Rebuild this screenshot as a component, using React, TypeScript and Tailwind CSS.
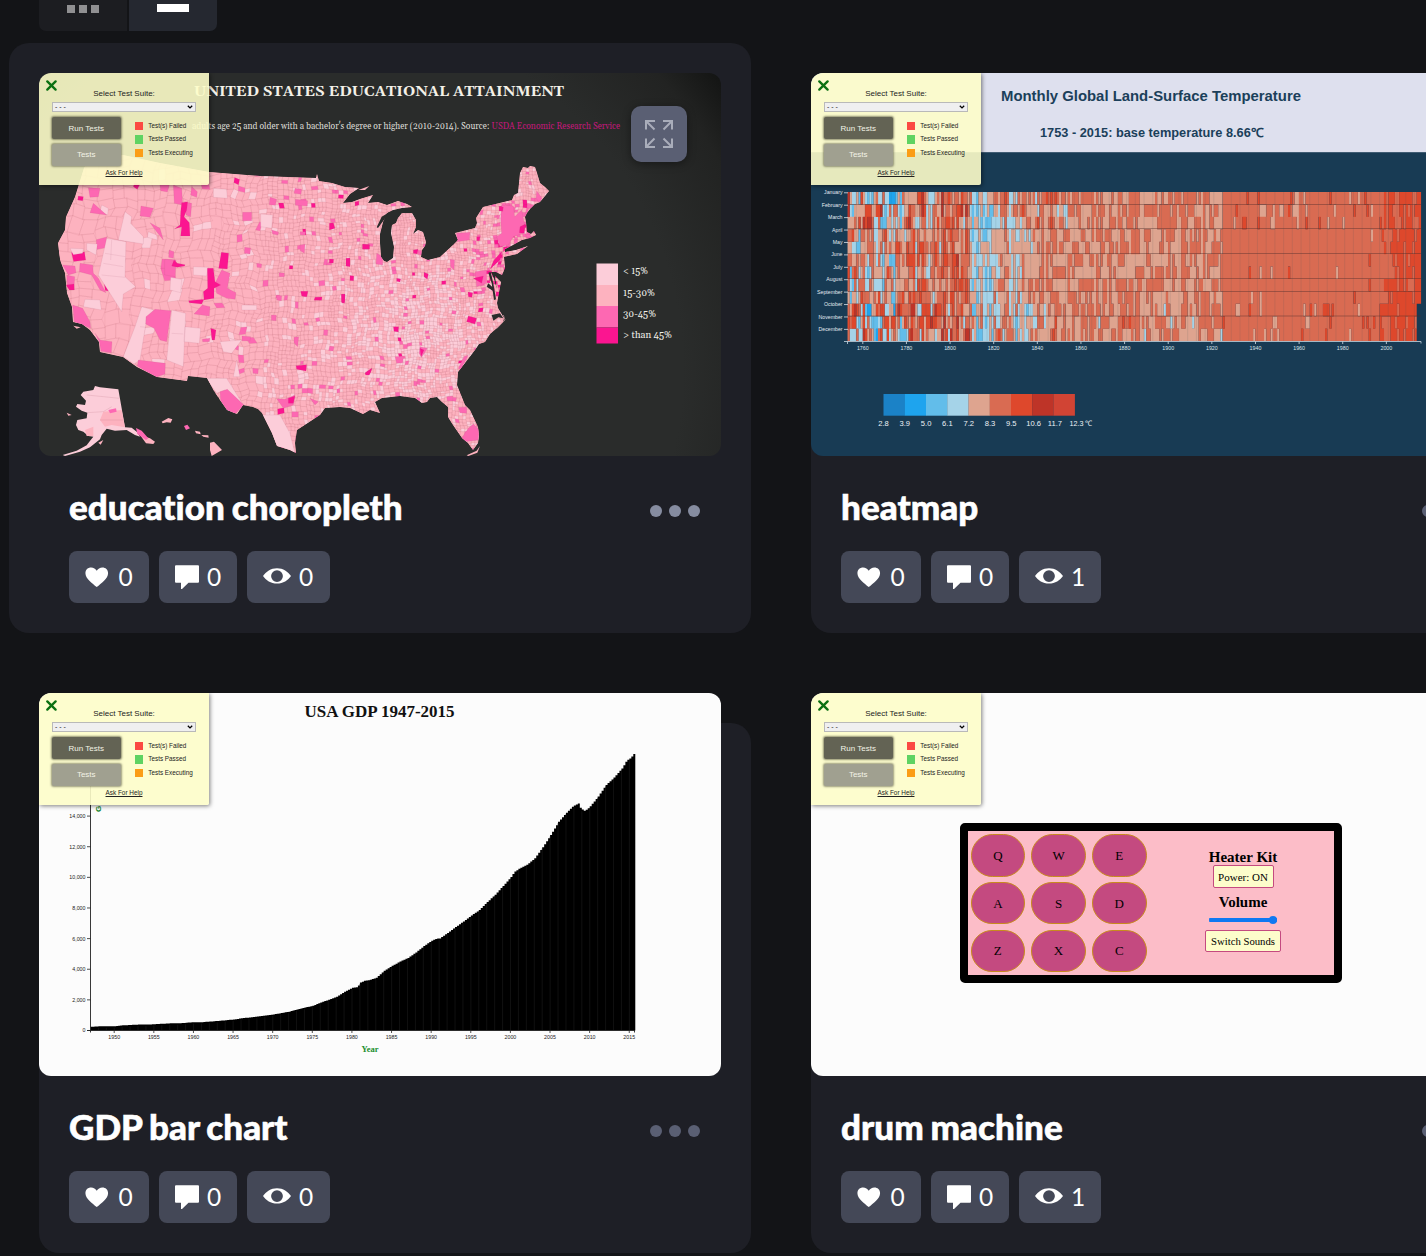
import React from "react";

/* ---------- deterministic helpers ---------- */
function makeRandom(seed: number) {
  let s = seed;
  return () => {
    s = (s * 1664525 + 1013904223) % 4294967296;
    return s / 4294967296;
  };
}

/* ---------- county map ---------- */
const LAND =
  "M84 168L88 162L110 157L123 155L160 163L209 172L260 176L316 178L317 174L319 181L332 183L345 187L359 188L350 194L343 203L352 202L360 199L373 195L368 203L378 202L387 205L398 201L407 204L412 207L402 208L393 210L387 213L383 222L380 234L380 243L381 257L384 261L387 262L393 258L394 247L391 233L392 225L396 223L398 218L402 213L412 213L416 220L416 227L413 234L418 230L423 232L426 242L425 246L422 250L421 257L428 260L440 257L453 245L458 240L455 233L463 231L475 228L477 223L476 218L483 207L512 200L514 195L518 193L520 173L523 167L528 168L530 166L535 167L537 173L540 183L545 187L549 191L545 196L540 202L535 204L530 209L527 213L525 217L526 222L527 232L531 234L534 231L536 235L530 238L522 240L513 245L505 249L505 252L516 250L528 246L517 254L504 257L505 268L502 275L496 272L491 272L494 279L497 290L495 276L501 282L497 303L498 308L504 318L503 322L497 328L490 334L485 342L479 344L475 350L465 363L458 372L457 385L465 405L470 410L478 427L479 436L478 443L473 450L468 443L462 438L453 425L448 417L448 407L442 402L437 397L430 398L427 402L422 403L415 398L400 396L382 398L375 402L380 413L370 410L363 414L350 408L340 407L325 408L320 415L297 430L295 443L296 453L290 450L277 446L272 433L262 413L258 409L253 407L243 405L237 414L227 410L220 400L214 391L207 378L188 376L187 381L157 377L137 367L123 357L100 352L99 342L90 330L82 324L73 322L72 307L67 293L65 273L60 260L58 243L65 230L66 217L75 197Z";

const LIGHT = 0;
const MID = 1;
const HOT = 2;
const DEEP = 3;
const MAP_FILLS = ["#fccdd9", "#fdb2bf", "#fd68b2", "#fb1590"];

function buildCounties() {
  const rnd = makeRandom(77);
  const paths = ["", "", "", ""];
  const warp = (x: number, y: number) => {
    const k = x < 260 ? 1 : 0.45;
    const wx = x + k * (2.2 * Math.sin(y / 7 + x / 31) + Math.sin(y / 2.7)) - (x < 260 ? (y - 250) * 0.1 * ((260 - x) / 200) : 0);
    const wy = y + k * (2 * Math.sin(x / 8 + y / 23) + 0.8 * Math.sin(x / 2.9));
    return `${wx.toFixed(1)} ${wy.toFixed(1)}`;
  };
  const pick = (x: number, y: number) => {
    const r = rnd();
    const south = Math.exp(-(((x - 415) / 65) ** 2) - ((y - 335) / 62) ** 2);
    const northEast = x > 494 && y > 203 && y < 246 ? 0.4 : 0;
    const coast = x > 470 && y > 240 && y < 296 ? 0.2 : 0;
    const west = x < 230 ? 0.005 : 0.03;
    if (r < 0.004 + northEast * 0.13 + coast * 0.3) return DEEP;
    if (r < 0.012 + west + northEast + coast) return HOT;
    const light = x < 230 ? 0.05 : x < 300 ? 0.1 : 0.16 + 0.6 * south + (y > 370 && x < 310 ? 0.4 : 0);
    return rnd() < light ? LIGHT : MID;
  };
  const split = (x: number, y: number, w: number, h: number) => {
    const cx = x + w / 2;
    const size = cx < 140 ? 17 : cx < 215 ? 13 : cx < 265 ? 9 : cx < 330 ? 6.6 : cx < 400 ? 5.4 : 4.7;
    if (w > size || h > size) {
      const t = 0.4 + rnd() * 0.2;
      if (w > h) {
        split(x, y, w * t, h);
        split(x + w * t, y, w * (1 - t), h);
      } else {
        split(x, y, w, h * t);
        split(x, y + h * t, w, h * (1 - t));
      }
      return;
    }
    const c = pick(cx, y + h / 2);
    paths[c] += `M${warp(x, y)}L${warp(x + w, y)}L${warp(x + w, y + h)}L${warp(x, y + h)}Z`;
  };
  split(45, 145, 515, 320);
  return paths;
}
const COUNTIES = buildCounties();

// Large western counties, drawn at three units per pixel.
const WEST_LIGHT =
  "M255 155L275 170L272 190L310 230L310 252L235 240ZM200 235L258 245L255 350L287 380L250 402L245 455L175 345L190 280ZM305 440L342 450L318 490L300 600L282 612L250 590L285 500ZM395 450L437 460L430 620L380 600ZM435 500L482 505L478 550L432 545ZM520 85L560 88L562 115L520 112ZM662 162L698 165L695 205L662 200ZM460 320L505 322L500 348L460 345ZM140 250L172 252L168 285L140 270ZM90 265L130 266L128 280L100 284ZM135 418L180 420L184 450L130 440ZM540 545L605 540L575 580L550 575ZM498 655L560 655L610 735L590 720L555 690L530 700ZM392 352L425 358L422 398L390 390ZM185 135L205 145L203 165L180 155ZM325 215L350 225L352 240L322 232ZM605 435L650 436L650 450L605 450ZM590 600L600 650L580 650ZM665 765L720 765L750 820L765 880L710 858Z";
const WEST_HOT =
  "M145 83L180 85L175 110L150 112ZM160 130L200 165L150 158ZM303 138L340 145L330 172L300 168ZM400 75L425 85L428 135L403 130ZM455 80L472 95L470 112L452 105ZM360 75L388 75L382 96L362 92ZM330 188L360 205L370 240L350 215ZM434 125L455 130L452 170L438 165ZM387 270L402 275L400 295L386 292ZM374 298L408 300L406 350L374 345ZM120 310L158 315L160 340L175 355L198 398L180 390L155 345L118 335ZM68 315L105 318L108 338L85 345ZM80 345L104 350L102 388L82 375ZM318 470L345 448L393 452L380 545L360 540L342 505L317 492ZM98 435L128 445L150 485L152 505L103 485ZM165 520L180 540L216 545L214 578L183 574L178 545ZM295 600L376 610L375 642L348 652L292 618ZM540 695L562 688L612 735L585 762L560 750L542 722ZM545 330L570 340L562 385L588 398L585 418L560 415L530 400L525 370ZM487 435L510 440L508 468L462 462ZM487 538L510 535L508 545L488 545ZM608 157L635 157L635 182L608 182ZM690 112L710 118L706 136L688 134ZM765 85L785 88L783 103L762 100ZM766 118L803 122L802 138L766 136ZM614 262L632 264L630 282L613 280ZM695 210L716 216L714 225L698 222ZM650 310L665 312L664 323L651 322ZM717 338L733 339L733 350L718 350ZM710 406L725 407L724 422L710 420ZM694 465L709 466L708 482L694 481ZM606 528L632 530L630 543L606 542ZM638 625L655 626L654 641L639 640ZM762 532L776 530L773 560L762 548ZM780 215L797 215L796 225L781 225ZM780 255L795 253L793 280L781 272ZM710 716L735 718L765 705L760 735L730 745ZM810 715L835 725L825 735Z";
const WEST_DEEP =
  "M425 128L443 125L440 150L432 170L448 188L450 228L422 228L425 200L403 207L420 195L422 155ZM544 277L566 280L562 327L536 325ZM502 325L520 325L525 365L542 375L522 385L522 415L492 420L490 395L503 385ZM446 422L492 418L485 432L448 428ZM402 300L412 310L435 314L434 318L412 322L395 318ZM115 108L130 110L128 122L113 120ZM78 375L102 372L103 390L88 390ZM283 70L300 72L292 88L280 80ZM768 617L800 614L798 633L770 628ZM968 253L988 254L988 268L968 268ZM868 190L880 188L885 205L868 210ZM782 394L804 394L800 410L785 408ZM825 412L846 411L845 421L822 421ZM904 403L915 402L914 430L905 428ZM512 505L528 510L524 540L516 540ZM868 297L881 298L880 309L868 309ZM745 715L765 708L760 730L745 730ZM975 638L996 624L990 640Z";
const EAST_HOT =
  "M485 405L520 408L524 440L545 420L555 470L550 490L520 500L505 525L480 530L470 500L485 490L482 450ZM405 605L440 600L440 640L410 650ZM350 490L390 487L388 510L350 515ZM385 1075L400 1062L418 1080L415 1110L375 1115L365 1105ZM355 1012L380 1012L380 1030L360 1028ZM165 860L190 858L188 878L170 880ZM110 550L128 560L128 585L108 582ZM590 362L606 385L598 398L588 385ZM320 980L338 978L338 993L322 992ZM355 895L372 860L385 855L362 900ZM330 568L344 570L342 600L332 590ZM240 830L262 835L245 862L237 850Z";
const EAST_DEEP =
  "M540 470L556 462L553 490L538 488ZM462 570L485 545L480 570L450 598ZM385 738L410 745L405 762L380 755ZM400 625L430 618L425 640ZM384 666L398 668L396 682L385 680ZM68 523L88 524L88 537L68 537ZM478 408L490 412L488 424L478 422ZM18 565L30 564L30 590L18 588ZM160 770L176 770L175 786L162 784ZM220 540L234 538L232 552L220 550ZM252 607L265 612L262 628L252 620ZM75 910L96 897L88 915L77 915ZM5 672L15 674L14 695L5 695ZM170 625L182 627L180 636L170 634ZM410 500L420 500L419 512L410 512ZM490 530L510 530L490 545ZM240 835L252 840L243 860Z";

function ChoroplethMap() {
  const legend = [
    ["< 15%", 263.5, 21.5],
    ["15-30%", 285, 21],
    ["30-45%", 306, 21.5],
    ["> than 45%", 327.5, 16],
  ] as const;
  return (
    <svg viewBox="39 73 682 383" className="block h-full w-full" fontFamily="'Gelasio','Georgia','Liberation Serif',serif">
      <defs>
        <radialGradient id="vignette" gradientUnits="userSpaceOnUse" cx="330" cy="370" r="490">
          <stop offset="0.72" stopColor="#2a2c2b" />
          <stop offset="0.9" stopColor="#222322" />
          <stop offset="1" stopColor="#131413" />
        </radialGradient>
        <clipPath id="land">
          <path d={LAND} />
        </clipPath>
      </defs>
      <rect x="39" y="73" width="682" height="383" fill="url(#vignette)" />
      <text x="194" y="96" fontSize="14.5" fontWeight="700" fill="#f4f1e8" textLength="370" lengthAdjust="spacingAndGlyphs">
        UNITED STATES EDUCATIONAL ATTAINMENT
      </text>
      <text x="192" y="129" fontSize="9.6" fill="#dddcd6" textLength="428" lengthAdjust="spacingAndGlyphs">
        adults age 25 and older with a bachelor's degree or higher (2010-2014). Source: <tspan fill="#c2187a">USDA Economic Research Service</tspan>
      </text>
      <g clipPath="url(#land)">
        <path d={LAND} fill={MAP_FILLS[MID]} />
        {COUNTIES.map((d, i) => (
          <path key={i} d={d} fill={MAP_FILLS[i]} stroke="#9c4f60" strokeOpacity="0.3" strokeWidth="0.25" />
        ))}
        <g transform="translate(40 160) scale(0.33333)" stroke="#a85a70" strokeOpacity="0.35" strokeWidth="1">
          <path d={WEST_LIGHT} fill={MAP_FILLS[LIGHT]} />
          <path d={WEST_HOT} fill={MAP_FILLS[HOT]} />
          <path d={WEST_DEEP} fill={MAP_FILLS[DEEP]} />
          <path d="M195 280L256 290M190 310L250 320M215 240L212 300M185 345L255 352M300 500L318 502M395 520L430 522" fill="none" />
        </g>
        <g transform="translate(340 70) scale(0.33333)" stroke="#a85a70" strokeOpacity="0.35" strokeWidth="1">
          <path d={EAST_HOT} fill={MAP_FILLS[HOT]} />
          <path d={EAST_DEEP} fill={MAP_FILLS[DEEP]} />
          <path d="M545 340L560 320L570 318L575 350L585 370M550 345L548 375M560 320L562 360" fill="none" />
        </g>
      </g>
      <g transform="translate(340 70) scale(0.33333)" fill="#2a2c2b">
        <path d="M20 392L45 372L80 362L62 384L38 392ZM110 472L125 440L150 425L130 452L114 474Z" />
        <path d="M445 608L455 640L462 690L468 688L460 640L452 606ZM440 650L458 662L462 656L445 640ZM455 735L480 730L490 745L475 742L460 752Z" />
        <path d="M380 1156L410 1142L420 1128L412 1148L385 1158Z" fill="#fcb1be" />
        <path d="M55 360L88 348L75 360Z" fill="#fcb1be" />
        <path d="M470 776L495 750L490 735" fill="none" stroke="#cf9aa5" strokeWidth="2" />
      </g>
      <g transform="translate(40 160) scale(0.33333)">
        <path
          fill={MAP_FILLS[LIGHT]}
          d="M165 678L180 682L235 688L255 802L275 803L290 815L300 830L285 825L260 810L225 812L200 806L185 825L180 838L165 850L150 862L120 875L75 888L68 885L110 872L140 856L152 840L160 830L145 828L130 815L115 810L108 795L112 780L140 775L142 758L125 752L108 740L112 732L135 735L138 722L122 705L130 695L160 690Z"
        />
        <path fill={MAP_FILLS[MID]} d="M190 755L245 750L255 802L215 795L195 800L180 780ZM135 810L160 800L160 828L140 828ZM195 775L215 760L230 780ZM300 825L330 835L345 845L340 852L318 850Z" />
        <path fill={MAP_FILLS[HOT]} d="M205 750L228 745L230 755L210 760ZM288 804L305 812L325 835L318 840L292 822ZM432 798L442 794L450 805L438 810Z" />
        <path fill="none" stroke="#a85a70" strokeOpacity="0.5" d="M140 705L190 710L238 715M142 758L190 755L215 740M180 780L250 780" />
        <path fill={MAP_FILLS[MID]} d="M365 785L385 774L397 778L392 788L380 787L368 790ZM465 812L480 815L482 823L468 820ZM484 825L505 826L506 833L490 830ZM510 848L522 845L546 870L515 888L510 870ZM80 758L95 765L85 767ZM175 848L190 840L182 854ZM100 497L122 502L110 506Z" />
      </g>
      {legend.map(([label, y, h], i) => (
        <g key={label}>
          <rect x="596.500" y={y} width="21.500" height={h} fill={MAP_FILLS[i]} />
          <text
            x="623"
            y={274.3 + i * 21.3}
            fontSize="9.600"
            fill="#f0efe9"
            textLength={[25, 32, 33, 49][i]}
            lengthAdjust="spacingAndGlyphs"
          >
            {label}
          </text>
        </g>
      ))}
    </svg>
  );
}

/* ---------- temperature heatmap ---------- */
const HEAT_FILLS = ["#1b82c7", "#1ea4ee", "#62bdea", "#a5d3e8", "#dea48f", "#d96b52", "#de482c", "#be3428"];
const MONTHS = ["January", "February", "March", "April", "May", "June", "July", "August", "September", "October", "November", "December"];
const CELL_W = 573.5 / 263;
const CELL_H = 149 / 12;

function buildHeat() {
  const rnd = makeRandom(4242);
  const paths = HEAT_FILLS.map(() => "");
  const yearly = Array.from({ length: 263 }, () => rnd() - 0.5);
  for (let m = 0; m < 12; m++) {
    let carry = 0;
    for (let y = 0; y < 263; y++) {
      if (y > 260 && m > 8) continue;
      const early = Math.max(0, 1 - y / 110);
      let mean = 5.35;
      if (y < 22) mean = 4.6;
      if (y >= 22 && y < 38) mean = 5.3;
      if (y >= 56 && y < 67) mean = 3.7;
      if (y >= 67 && y < 85) mean = 4.55;
      if (y >= 85 && y < 172) mean = 4.9;
      if (y > 118 && y < 135) mean = 5.1;
      if (y >= 172) mean = 5.45;
      if (y > 225) mean = 5.55;
      if (y > 243) mean = 5.75 + (y - 243) * 0.03;
      const winter = m < 3 || m > 8 ? 1.35 : 0.8;
      carry = carry * 0.3 + (rnd() - 0.5);
      const spread = (1.05 + early * 2.7) * winter * (y > 172 ? 0.75 : 1);
      const v = mean + carry * spread + yearly[y] * (0.5 + early * 1.4);
      const c = Math.max(0, Math.min(y > 60 && y < 243 ? 6 : 7, Math.floor(v)));
      const shade = y > 243 ? Math.min(6, Math.max(5, c)) : c;
      paths[shade] += `M${(847.5 + y * CELL_W).toFixed(2)} ${(192 + m * CELL_H).toFixed(2)}h${(CELL_W + 0.08).toFixed(2)}v${(CELL_H + 0.1).toFixed(2)}h-${(CELL_W + 0.08).toFixed(2)}z`;
    }
  }
  return paths;
}
const HEAT = buildHeat();

function HeatmapChart() {
  const ticks = Array.from({ length: 13 }, (_, i) => 1760 + i * 20);
  const scale = ["2.8", "3.9", "5.0", "6.1", "7.2", "8.3", "9.5", "10.6", "11.7"];
  const keyFills = [...HEAT_FILLS, "#d14434"];
  return (
    <svg viewBox="811 73 682 383" className="block h-full w-full" fontFamily="'Liberation Sans',Arial,sans-serif">
      <rect x="811" y="73" width="682" height="383" fill="#183b54" />
      <rect x="811" y="73" width="682" height="79.200" fill="#dee0ee" />
      <text x="1001" y="100.500" fontSize="15" fontWeight="700" fill="#1b3f5a" textLength="300" lengthAdjust="spacingAndGlyphs">
        Monthly Global Land-Surface Temperature
      </text>
      <text x="1040" y="137" fontSize="12.500" fontWeight="700" fill="#1b3f5a" textLength="223" lengthAdjust="spacingAndGlyphs">
        1753 - 2015: base temperature 8.66℃
      </text>
      {HEAT.map((d, i) => (
        <path key={i} d={d} fill={HEAT_FILLS[i]} />
      ))}
      {[204.5, 228.5, 253.5, 278.5, 291.5, 316].map((y) => (
        <path key={y} d={`M847.5 ${y}H1421`} stroke="#4c2c28" strokeOpacity="0.6" strokeWidth="0.7" />
      ))}
      {Array.from({ length: 66 }, (_, i) => (
        <path key={i} d={`M${847.5 + i * CELL_W * 4} 192V341`} stroke="#3f5560" strokeOpacity="0.22" strokeWidth="0.6" />
      ))}
      <path d="M844 341.500h577v2M847.500 341.500v2.500" stroke="#cbd8e2" strokeWidth="0.8" fill="none" />
      {MONTHS.map((m, i) => (
        <g key={m}>
          <path d={`M844 ${192.5 + i * CELL_H + 0.3}h4`} stroke="#dce5ec" strokeWidth="0.8" />
          <text x="842.500" y={194.4 + i * CELL_H} fontSize="5.200" fill="#e3eaf0" textAnchor="end">
            {m}
          </text>
        </g>
      ))}
      {ticks.map((t, i) => (
        <g key={t}>
          <path d={`M${862.8 + i * 43.63} 341.500v2.500`} stroke="#dce5ec" strokeWidth="0.8" />
          <text x={862.8 + i * 43.63} y="349.500" fontSize="5.300" fill="#dce5ec" textAnchor="middle">
            {t}
          </text>
        </g>
      ))}
      {keyFills.map((f, i) => (
        <rect key={i} x={883.5 + i * 21.25} y="394" width="21.400" height="21.700" fill={f} />
      ))}
      {scale.map((s, i) => (
        <text key={s} x={883.5 + i * 21.3 + (i > 6 ? 1 : 0)} y="426" fontSize="7.600" fill="#eef2f6" textAnchor="middle">
          {s}
        </text>
      ))}
      <text x="1069.500" y="426" fontSize="7.600" fill="#eef2f6" textLength="23.500" lengthAdjust="spacingAndGlyphs">
        12.3 ℃
      </text>
    </svg>
  );
}

/* ---------- GDP bar chart ---------- */
const GDP: [number, number][] = [
  [1947, 243], [1948, 270], [1949, 272], [1950, 281], [1951, 337], [1953, 388], [1954, 385], [1955, 414], [1957, 470], [1958, 468],
  [1960, 543], [1961, 545], [1963, 625], [1965, 720], [1966, 798], [1968, 910], [1970, 1050], [1972, 1230], [1973, 1380], [1974, 1500],
  [1975, 1620], [1976, 1830], [1978, 2200], [1979, 2540], [1980, 2790], [1980.6, 2830], [1981, 3130], [1981.6, 3270], [1982, 3280],
  [1983, 3440], [1984, 3900], [1985, 4230], [1986, 4510], [1987, 4740], [1988, 5100], [1989, 5520], [1990, 5870], [1990.6, 6000],
  [1991, 6020], [1992, 6380], [1993, 6760], [1994, 7130], [1995, 7520], [1996, 7870], [1997, 8400], [1998, 8880], [1999, 9450],
  [2000, 10030], [2000.4, 10350], [2001, 10570], [2002, 10830], [2003, 11250], [2004, 11980], [2005, 12770], [2006, 13640], [2007, 14230],
  [2007.8, 14650], [2008.5, 14830], [2008.8, 14500], [2009.3, 14350], [2009.7, 14500], [2010, 14650], [2011, 15300], [2012, 16050],
  [2013, 16530], [2014, 17120], [2014.6, 17650], [2015.1, 17800], [2015.6, 18150],
];
function gdpAt(year: number) {
  const i = Math.max(1, GDP.findIndex(([y]) => y >= year));
  const [y0, v0] = GDP[i - 1];
  const [y1, v1] = GDP[i];
  return v0 + ((v1 - v0) * (year - y0)) / (y1 - y0);
}
const GDP_BARS = Array.from({ length: 275 }, (_, i) => {
  const h = gdpAt(1947 + i * 0.25) * 0.0153;
  return `M${(90.5 + i * 1.981).toFixed(2)} 1030.5v-${h.toFixed(2)}h2v${h.toFixed(2)}z`;
}).join("");

function GdpChart() {
  const years = Array.from({ length: 14 }, (_, i) => 1950 + i * 5);
  const values = ["0", "2,000", "4,000", "6,000", "8,000", "10,000", "12,000", "14,000"];
  return (
    <svg viewBox="39 693 682 383" className="block h-full w-full" fontFamily="'Liberation Sans',Arial,sans-serif">
      <rect x="39" y="693" width="682" height="383" fill="#fcfcfc" />
      <text
        x="304.500"
        y="717"
        fontSize="16.500"
        fontWeight="700"
        fontFamily="'Liberation Serif',serif"
        fill="#111"
        textLength="150"
        lengthAdjust="spacingAndGlyphs"
      >
        USA GDP 1947-2015
      </text>
      <path d={GDP_BARS} fill="#000" />
      {Array.from({ length: 68 }, (_, i) => {
        const x = 98.4 + i * 7.925;
        const top = 1030 - gdpAt(1948 + i) * 0.0153 + 2;
        return <path key={i} d={`M${x} 1030V${top}`} stroke="#1b1b1b" strokeWidth="0.6" />;
      })}
      <text x="100.500" y="812" transform="rotate(-90 100.500 812)" fontSize="8" fontWeight="700" fill="#14862a">
        G
      </text>
      <path d="M90.500 780V1032.500M87 1030.500H635M634.500 1030v2.500" stroke="#222" strokeWidth="0.9" fill="none" />
      {values.map((v, i) => (
        <g key={v}>
          <path d={`M87 ${1030.500 - i * 30.63}h3.500`} stroke="#222" strokeWidth="0.8" />
          <text x="85.500" y={1032.400 - i * 30.63} fontSize="5.300" fill="#222" textAnchor="end">
            {v}
          </text>
        </g>
      ))}
      {years.map((y, i) => (
        <g key={y}>
          <path d={`M${114.2 + i * 39.62} 1030.500v2.500`} stroke="#222" strokeWidth="0.8" />
          <text x={114.2 + i * 39.62} y="1038.800" fontSize="5.300" fill="#222" textAnchor="middle">
            {y}
          </text>
        </g>
      ))}
      <text x="370" y="1051.500" fontSize="8.500" fontWeight="700" fontFamily="'Liberation Serif',serif" fill="#1a8f2c" textAnchor="middle">
        Year
      </text>
    </svg>
  );
}

/* ---------- drum machine ---------- */
function DrumMachine() {
  return (
    <div className="h-full w-full bg-[#fcfcfc] pt-[130px] pl-[149px] font-['Liberation_Serif',serif] text-black">
      <div className="flex h-[160px] w-[382px] rounded-[5px] border-8 border-black bg-[#fcbdc8]">
        <div className="grid h-full w-[182px] grid-cols-[54.700px_54.700px_54.700px] content-start gap-x-[6px] gap-y-[5.300px] pt-[3px] pl-[2.500px]">
          {"QWEASDZXC".split("").map((k) => (
            <div
              key={k}
              className="flex h-[42.500px] w-[54.700px] items-center justify-center rounded-[22px] border border-[#c88a1e] bg-[#c44a80] text-[13px] leading-none"
            >
              {k}
            </div>
          ))}
        </div>
        <div className="flex flex-1 flex-col items-center pt-[18px] pl-[2px]">
          <div className="text-[15px] leading-[16px] font-bold">Heater Kit</div>
          <div className="flex h-[22.500px] w-[61px] items-center justify-center rounded-[2px] border border-[#c44a80] bg-[#fdfdcb] pt-px text-[11px]">
            Power: ON
          </div>
          <div className="mt-[6px] text-[15px] leading-[17px] font-bold">Volume</div>
          <div className="mt-[5px] flex h-[8px] w-[68px] items-center justify-end rounded-full bg-[linear-gradient(#0f79f2,#0f79f2)] bg-[length:100%_4px] bg-center bg-no-repeat">
            <div className="size-[8px] rounded-full bg-[#0f79f2]" />
          </div>
          <div className="mt-[6px] flex h-[22.500px] w-[76px] items-center justify-center rounded-[2px] border border-[#c44a80] bg-[#fdfdcb] text-[10.700px]">
            Switch Sounds
          </div>
        </div>
      </div>
    </div>
  );
}

/* ---------- test suite overlay ---------- */
function TestPanel() {
  const legend = [
    ["bg-[#fb4a42]", "Test(s) Failed"],
    ["bg-[#5fd362]", "Tests Passed"],
    ["bg-[#fb9d16]", "Tests Executing"],
  ];
  return (
    <div className="absolute top-0 left-0 flex h-[111.500px] w-[170px] flex-col rounded-br-[2px] bg-[#fdfdc9]/90 font-['Liberation_Sans',sans-serif] text-[#222] shadow-[1px_1px_4px_rgba(0,0,0,0.5)]">
      <svg viewBox="0 0 11 11" className="mt-[6.500px] ml-[7px] size-[11px]" fill="none" stroke="#0b7012" strokeWidth="2.300" strokeLinecap="round">
        <path d="M1.300 1.400L9.600 9.600M9.600 1.400L1.300 9.600" />
      </svg>
      <div className="-mt-[2px] text-center text-[8px] leading-[10px]">Select Test Suite:</div>
      <div className="mt-[3.500px] ml-[13px] flex h-[9.500px] w-[144px] items-center justify-between border border-[#b9b9b9] bg-[#efeff0] px-[2px] text-[7px] leading-none">
        <span>- - -</span>
        <svg viewBox="0 0 6 4" className="h-[4px] w-[6px]" fill="none" stroke="#000" strokeWidth="1.300">
          <path d="M0.800 0.700L3 2.900L5.200 0.700" />
        </svg>
      </div>
      <div className="mt-[5.500px] ml-[12.500px] flex">
        <div className="flex w-[69.500px] flex-col gap-[4.500px] text-[8px] text-[#f3f3e6]">
          <div className="flex h-[22px] items-center justify-center rounded-[2px] bg-[#636354] pt-px shadow-[0_0_2px_1px_rgba(70,70,50,0.6)]">Run Tests</div>
          <div className="flex h-[22px] items-center justify-center rounded-[2px] bg-[#a0a090] pt-px shadow-[0_0_2px_1px_rgba(90,90,70,0.6)]">Tests</div>
        </div>
        <div className="ml-[14px] flex flex-col gap-[5px] pt-[5px]">
          {legend.map(([color, label]) => (
            <div key={label} className="flex h-[8.300px] items-center gap-[5px] text-[6.350px] leading-none whitespace-nowrap">
              <span className={`size-[8.300px] ${color}`} />
              {label}
            </div>
          ))}
        </div>
      </div>
      <div className="mt-[3.500px] text-center text-[6.400px] leading-[8px] underline">Ask For Help</div>
    </div>
  );
}

/* ---------- card chrome ---------- */
function Heart() {
  return (
    <svg viewBox="0 0 24 21" className="h-[20.500px] w-[23.500px] shrink-0" fill="#fff">
      <path d="M12 20.500C7.500 16.600 0.400 11.800 0.400 6.300C0.400 2.700 3 0.500 6.200 0.500C8.700 0.500 10.900 1.800 12 3.900C13.100 1.800 15.300 0.500 17.800 0.500C21 0.500 23.600 2.700 23.600 6.300C23.600 11.800 16.500 16.600 12 20.500Z" />
    </svg>
  );
}
function Comment() {
  return (
    <svg viewBox="0 0 24 24" className="size-[24px] shrink-0" fill="#fff">
      <path d="M1 0.300H23Q24 0.300 24 1.300V16.800Q24 17.800 23 17.800H13.500L7 24H6V17.800H1Q0 17.800 0 16.800V1.300Q0 0.300 1 0.300Z" />
    </svg>
  );
}
function Eye() {
  return (
    <svg viewBox="0 0 28 16" className="mb-[3px] h-[16px] w-[28px] shrink-0" fill="#fff" fillRule="evenodd">
      <path d="M14 0.200C7.800 0.200 3 3.600 0 8C3 12.400 7.800 15.600 14 15.600S25 12.400 28 8C25 3.600 20.200 0.200 14 0.200ZM14 2.200A5.900 5.900 0 1 1 14 14A5.900 5.900 0 1 1 14 2.200Z" />
    </svg>
  );
}

type CardProps = { title: string; views: number; hovered?: boolean; children: React.ReactNode };

function Card({ title, views, hovered, children }: CardProps) {
  const stat = "flex h-[52px] items-center rounded-[8px] bg-[#444857]";
  return (
    <article className="relative flex h-[560px] w-[712px] flex-col">
      <div
        className={
          hovered
            ? "absolute -top-[30px] right-0 bottom-0 -left-[30px] rounded-[20px] bg-[#1e1f26]"
            : "absolute top-[30px] right-0 bottom-0 left-0 rounded-[20px] bg-[#1e1f26]"
        }
      />
      <div className="relative h-[383px] w-[682px] overflow-hidden rounded-[12px]">
        {children}
        <TestPanel />
        {hovered && (
          <div className="absolute top-[33px] right-[34px] flex size-[56px] items-center justify-center rounded-[10px] bg-[#5a5f73] shadow-[0_2px_8px_rgba(0,0,0,0.4)]">
            <svg viewBox="0 0 30 30" className="size-[30px]" fill="none" stroke="#a9adba" strokeWidth="2">
              <path d="M2 10.500V2H11M2.500 2.500L10.500 10.500M19 2H28V10.500M27.500 2.500L19.500 10.500M2 19.500V28H11M2.500 27.500L10.500 19.500M19 28H28V19.500M27.500 27.500L19.500 19.500" />
            </svg>
          </div>
        )}
      </div>
      <div className="relative mt-[28px] flex h-[44px] items-center justify-between pr-[51px] pl-[30px]">
        <h3 className="text-[35px] leading-[44px] font-black tracking-[0.040px] text-white [-webkit-text-stroke:0.6px_white] [font-variant-ligatures:none] [word-spacing:-1.500px]">
          {title}
        </h3>
        <div className="mt-[10px] flex gap-[7px]">
          {[0, 1, 2].map((i) => (
            <span key={i} className={`size-[12px] rounded-full ${hovered ? "bg-[#868ca0]" : "bg-[#5a5f73]"}`} />
          ))}
        </div>
      </div>
      <div className="relative mt-[23px] flex gap-[10px] pl-[30px] text-[24.500px] leading-none text-white">
        <div className={`${stat} w-[80px] gap-[10px] pl-[16px]`}>
          <Heart />
          <span className="mt-px">0</span>
        </div>
        <div className={`${stat} w-[78px] gap-[8px] pl-[16px]`}>
          <Comment />
          <span className="mt-px">0</span>
        </div>
        <div className={`${stat} gap-[8px] pl-[16px] ${views ? "w-[82px]" : "w-[83px]"}`}>
          <Eye />
          <span className="mt-px">{views}</span>
        </div>
      </div>
    </article>
  );
}

export default function App() {
  return (
    <div className="h-[1256px] w-[1426px] overflow-hidden bg-[#131417] font-[Lato,sans-serif]">
      <div className="flex h-[31px] gap-[2px] pl-[39px]">
        <div className="flex h-[31px] w-[88px] items-start justify-center gap-[4px] rounded-bl-[7px] bg-[#1c1d21] pt-[4.500px]">
          <span className="size-[8px] bg-[#909092]" />
          <span className="size-[8px] bg-[#909092]" />
          <span className="size-[8px] bg-[#909092]" />
        </div>
        <div className="flex h-[31px] w-[88px] items-start justify-center rounded-br-[7px] bg-[#252830] pt-[4px]">
          <span className="h-[7.500px] w-[32px] bg-white" />
        </div>
      </div>
      <main className="grid w-max grid-cols-2 gap-[60px] pt-[42px] pl-[39px]">
        <Card title="education choropleth" views={0} hovered>
          <ChoroplethMap />
        </Card>
        <Card title="heatmap" views={1}>
          <HeatmapChart />
        </Card>
        <Card title="GDP bar chart" views={0}>
          <GdpChart />
        </Card>
        <Card title="drum machine" views={1}>
          <DrumMachine />
        </Card>
      </main>
    </div>
  );
}
